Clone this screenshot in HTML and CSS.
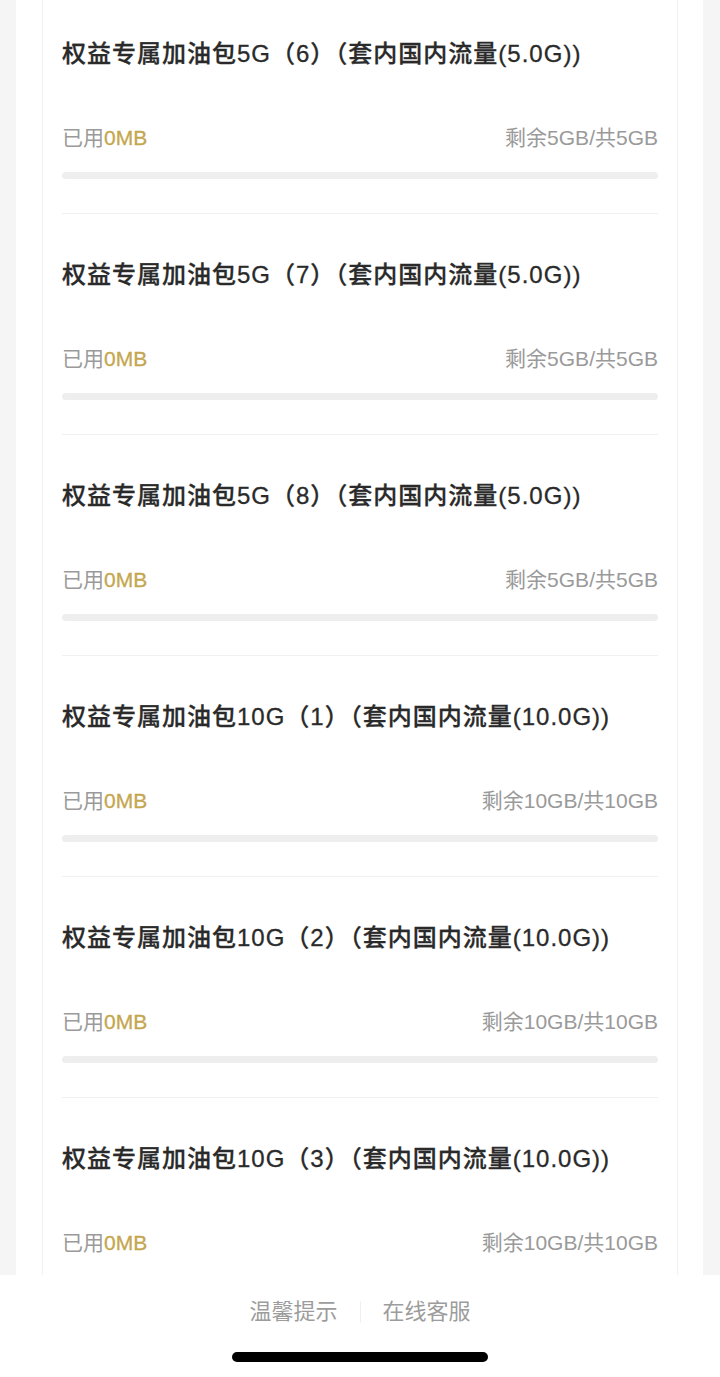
FILE: index.html
```html
<!DOCTYPE html>
<html lang="zh-CN">
<head>
<meta charset="utf-8">
<title>流量包</title>
<link rel="stylesheet" href="styles.css">
</head>
<body>
<div class="page">
  <div class="panel">
    <div class="card">
      <div class="item">
        <div class="title">权益专属加油包5G（6）（套内国内流量(5.0G))</div>
        <div class="usage"><span class="used">已用<em>0MB</em></span><span class="left">剩余5GB/共5GB</span></div>
        <div class="bar"></div>
      </div>
      <div class="item">
        <div class="title">权益专属加油包5G（7）（套内国内流量(5.0G))</div>
        <div class="usage"><span class="used">已用<em>0MB</em></span><span class="left">剩余5GB/共5GB</span></div>
        <div class="bar"></div>
      </div>
      <div class="item">
        <div class="title">权益专属加油包5G（8）（套内国内流量(5.0G))</div>
        <div class="usage"><span class="used">已用<em>0MB</em></span><span class="left">剩余5GB/共5GB</span></div>
        <div class="bar"></div>
      </div>
      <div class="item">
        <div class="title">权益专属加油包10G（1）（套内国内流量(10.0G))</div>
        <div class="usage"><span class="used">已用<em>0MB</em></span><span class="left">剩余10GB/共10GB</span></div>
        <div class="bar"></div>
      </div>
      <div class="item">
        <div class="title">权益专属加油包10G（2）（套内国内流量(10.0G))</div>
        <div class="usage"><span class="used">已用<em>0MB</em></span><span class="left">剩余10GB/共10GB</span></div>
        <div class="bar"></div>
      </div>
      <div class="item">
        <div class="title">权益专属加油包10G（3）（套内国内流量(10.0G))</div>
        <div class="usage"><span class="used">已用<em>0MB</em></span><span class="left">剩余10GB/共10GB</span></div>
        <div class="bar"></div>
      </div>
    </div>
  </div>
  <div class="footer">
    <div class="links">
      <span class="link">温馨提示</span>
      <span class="sep"></span>
      <span class="link">在线客服</span>
    </div>
    <div class="home"></div>
  </div>
</div>
</body>
</html>
```

FILE: styles.css
```css
* { box-sizing: border-box; }
html, body {
  margin: 0;
  padding: 0;
  height: 1377px;
  overflow: hidden;
  background: #f5f5f5;
  font-family: "Liberation Sans", "Noto Sans CJK SC", sans-serif;
}
.page {
  position: relative;
  height: 1377px;
  overflow: hidden;
}
.panel {
  margin: 0 17px 0 16px;
  background: #fff;
  padding: 0 25px 0 26px;
  height: 1377px;
}
.card {
  background: #fff;
  border-left: 1px solid #f0f0f0;
  border-right: 1px solid #f0f0f0;
  padding: 0 19px;
  height: 1377px;
}
.item {
  padding: 44px 0 34px;
  border-bottom: 1px solid #f1f1f1;
}
.item:first-child {
  padding-top: 37px;
}
.title {
  font-size: 24px;
  line-height: 34px;
  height: 34px;
  color: #2a2a2a;
  font-weight: 500;
  white-space: nowrap;
  letter-spacing: 1px;
  -webkit-text-stroke: 0.3px #2a2a2a;
}
.usage {
  margin-top: 53px;
  display: flex;
  justify-content: space-between;
  font-size: 21px;
  line-height: 28px;
  height: 28px;
  color: #9a9a9a;
}
.usage em {
  font-style: normal;
  color: #c4a64e;
  -webkit-text-stroke: 0.3px #c4a64e;
}
.bar {
  margin-top: 20px;
  height: 7px;
  border-radius: 4px;
  background: #eeeeee;
}
.footer {
  position: absolute;
  left: 0;
  right: 0;
  bottom: 0;
  height: 102px;
  background: #fff;
  display: flex;
  flex-direction: column;
  align-items: center;
}
.links {
  margin-top: 22px;
  display: flex;
  align-items: center;
  height: 30px;
  font-size: 22px;
  line-height: 30px;
  color: #9c9c9c;
}
.sep {
  width: 1px;
  height: 22px;
  background: #f0f0f0;
  margin: 0 22px;
}
.home {
  margin-top: 25px;
  width: 256px;
  height: 10px;
  border-radius: 5px;
  background: #000;
}
```
